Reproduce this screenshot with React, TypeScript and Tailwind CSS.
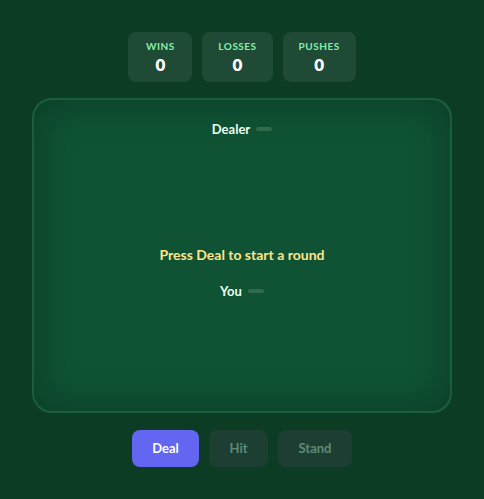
import React from "react";

const font = { fontFamily: "Lato, 'Noto Sans', sans-serif" };

function Stat({ label, value }: { label: string; value: string }) {
  return (
    <div className="flex h-[50px] min-w-[64px] flex-col items-center rounded-lg bg-[#1f4a35] px-4 pt-[7px]">
      <span className="text-[10px] font-bold leading-[14px] tracking-[0.5px] text-[#86efac]">{label}</span>
      <span className="mt-[2px] text-[17px] font-extrabold leading-[20px] text-white">{value}</span>
    </div>
  );
}

function HandLabel({ name }: { name: string }) {
  return (
    <div className="flex items-center justify-center gap-[6px]">
      <span className="text-[13px] font-bold leading-[16px] text-[#ecfdf5]">{name}</span>
      <span className="h-[4px] w-[16px] rounded-full bg-[#2f6b4c]" />
    </div>
  );
}

export default function App() {
  return (
    <div className="flex min-h-[499px] w-full flex-col items-center bg-[#0c3d24] pt-[32px]" style={font}>
      <div className="flex gap-[10px]">
        <Stat label="WINS" value="0" />
        <Stat label="LOSSES" value="0" />
        <Stat label="PUSHES" value="0" />
      </div>
      <div className="mt-[16px] flex h-[315px] w-[420px] flex-col rounded-[20px] border-2 border-[#1b5e3b] bg-[#0f5234] pt-[21px] shadow-[inset_0_0_40px_rgba(0,0,0,0.28)]">
        <HandLabel name="Dealer" />
        <div className="mt-[110px] text-center text-[14px] font-bold leading-[16px] text-[#fde68a]">
          Press Deal to start a round
        </div>
        <div className="mt-[20px]">
          <HandLabel name="You" />
        </div>
      </div>
      <div className="mt-[17px] flex gap-[10px]">
        <button className="h-[37px] w-[67px] rounded-lg bg-[#6366f1] text-[13px] font-bold text-white">Deal</button>
        <button className="h-[37px] w-[59px] rounded-lg bg-[#1d3f33] text-[13px] font-bold text-[#5e8a76]">Hit</button>
        <button className="h-[37px] w-[74px] rounded-lg bg-[#1d3f33] text-[13px] font-bold text-[#5e8a76]">Stand</button>
      </div>
    </div>
  );
}
